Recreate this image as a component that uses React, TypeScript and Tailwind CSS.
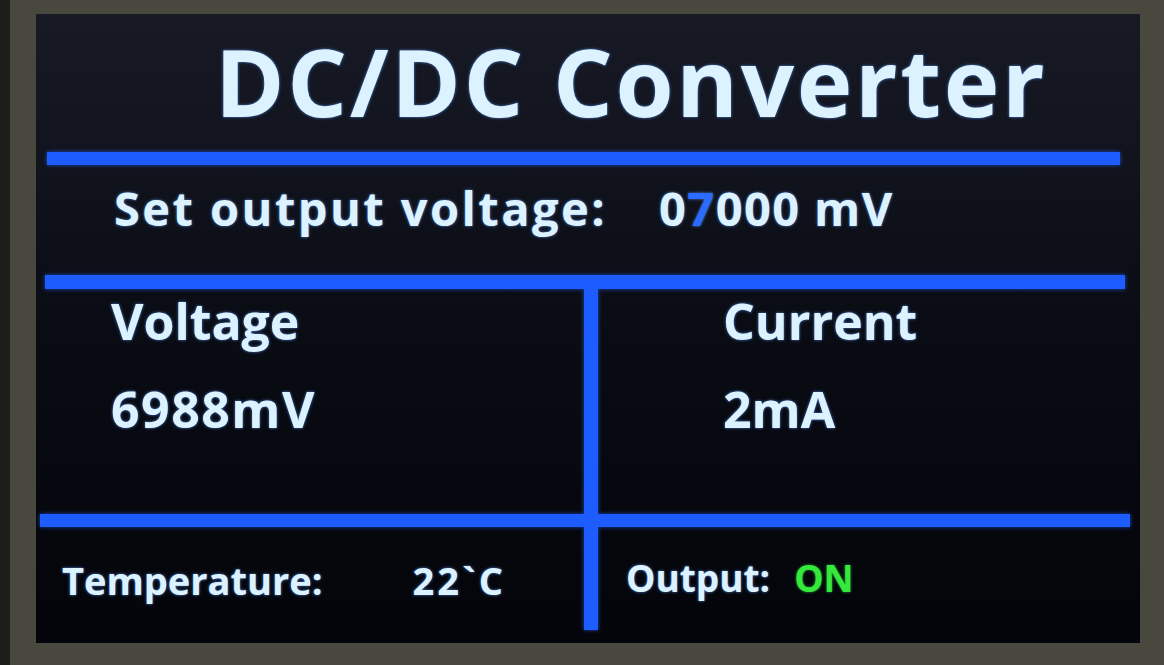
import React from 'react';

/**
 * DC/DC converter front panel, as shown on the unit's TFT screen.
 */

const glow = '[text-shadow:0_0_3px_rgba(90,150,255,0.85)]';

const HLine: React.FC<{ className?: string }> = ({ className = '' }) => (
  <div className={`h-[13px] bg-[#1d5cff] shadow-[0_0_4px_rgba(40,100,255,0.7)] ${className}`} />
);

const VLine: React.FC<{ className?: string }> = ({ className = '' }) => (
  <div className={`w-[14px] shrink-0 bg-[#1d5cff] shadow-[0_0_4px_rgba(40,100,255,0.7)] ${className}`} />
);

export default function App() {
  return (
    <div className="w-[1164px] h-[665px] bg-[#48483f] border-l-[10px] border-[#1d1d19] pl-[26px] pt-[14px] pr-[24px] pb-[22px] font-['Open_Sans',sans-serif]">
      <div className={`w-full h-full flex flex-col bg-linear-to-b from-[#171a25] via-[#0a0c14] to-[#04050a] text-[#dcf3ff] font-bold ${glow}`}>
        {/* Title */}
        <div className="h-[138px] pt-[20px] pl-[179px]">
          <div className="text-[94px] leading-none tracking-[0.028em]">DC/DC Converter</div>
        </div>
        <HLine className="ml-[11px] mr-[20px]" />

        {/* Set point */}
        <div className="h-[110px] pt-[20px] pl-[78px] flex items-start">
          <span className="text-[47px] leading-none tracking-[0.052em]">Set output voltage:</span>
          <span className="text-[47px] leading-none tracking-[0.03em] ml-[52px]">
            0<span className="text-[#2b6cff]">7</span>000 mV
          </span>
        </div>
        <HLine className="h-[14px] ml-[9px] mr-[15px]" />

        {/* Measurements */}
        <div className="h-[225px] flex">
          <div className="w-[548px] pt-[7px] pl-[75px] flex flex-col gap-[38px] text-[50px] leading-none">
            <div>Voltage</div>
            <div className="tracking-[0.03em]">6988mV</div>
          </div>
          <VLine />
          <div className="flex-1 pt-[7px] pl-[125px] flex flex-col gap-[38px] text-[50px] leading-none">
            <div>Current</div>
            <div>2mA</div>
          </div>
        </div>
        <HLine className="ml-[4px] mr-[10px]" />

        {/* Status */}
        <div className="h-[103px] flex">
          <div className="w-[548px] pt-[34px] pl-[26px] flex items-start text-[38px] leading-none">
            <span>Temperature:</span>
            <span className="ml-[90px] tracking-[0.08em]">22`C</span>
          </div>
          <VLine />
          <div className="flex-1 pt-[32px] pl-[28px] flex items-start text-[37px] leading-none">
            <span>Output:</span>
            <span className="ml-[24px] text-[#35e83c] [text-shadow:0_0_3px_rgba(60,255,80,0.6)]">ON</span>
          </div>
        </div>
      </div>
    </div>
  );
}
